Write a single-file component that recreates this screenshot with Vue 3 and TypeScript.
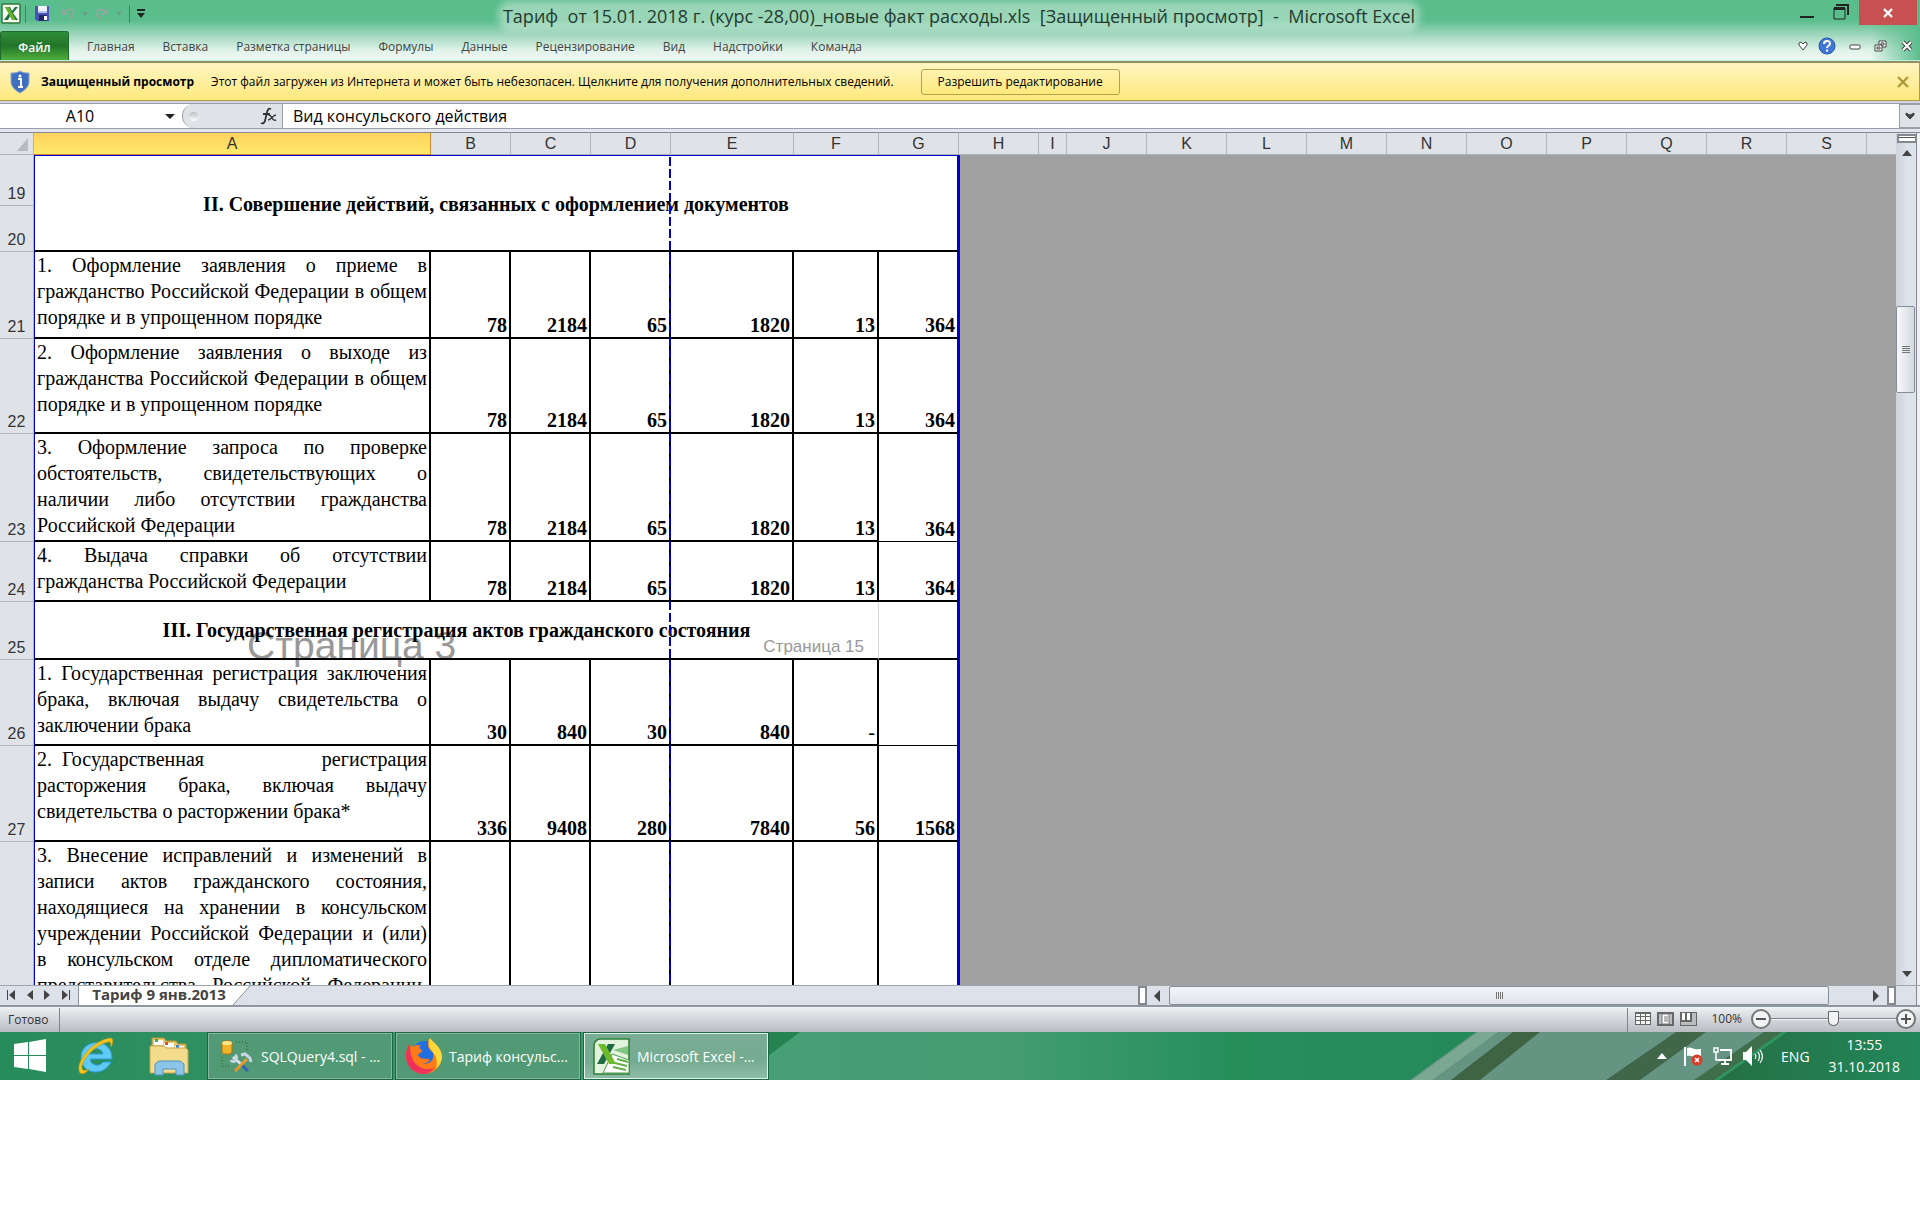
<script setup lang="ts">
import { ref } from 'vue'

interface Column {
  name: string
  width: number
}

interface TariffRow {
  num: number
  height: number
  text: string
  values: string[]
  thinLast?: boolean
  open?: boolean
}

const title = 'Тариф  от 15.01. 2018 г. (курс -28,00)_новые факт расходы.xls  [Защищенный просмотр]  -  Microsoft Excel'

const tabs: string[] = [
  'Главная', 'Вставка', 'Разметка страницы', 'Формулы', 'Данные',
  'Рецензирование', 'Вид', 'Надстройки', 'Команда',
]

const columns: Column[] = [
  { name: 'A', width: 397 }, { name: 'B', width: 80 }, { name: 'C', width: 80 },
  { name: 'D', width: 80 }, { name: 'E', width: 123 }, { name: 'F', width: 85 },
  { name: 'G', width: 80 }, { name: 'H', width: 80 }, { name: 'I', width: 28 },
  ...['J', 'K', 'L', 'M', 'N', 'O', 'P', 'Q', 'R', 'S'].map((name) => ({ name, width: 80 })),
]

const documentRows: TariffRow[] = [
  { num: 21, height: 87, text: '1. Оформление заявления о приеме в гражданство Российской Федерации в общем порядке и в упрощенном порядке', values: ['78', '2184', '65', '1820', '13', '364'] },
  { num: 22, height: 95, text: '2. Оформление заявления о выходе из гражданства Российской Федерации в общем порядке и в упрощенном порядке', values: ['78', '2184', '65', '1820', '13', '364'] },
  { num: 23, height: 108, text: '3. Оформление запроса по проверке обстоятельств, свидетельствующих о наличии либо отсутствии гражданства Российской Федерации', values: ['78', '2184', '65', '1820', '13', '364'], thinLast: true },
  { num: 24, height: 60, text: '4. Выдача справки об отсутствии гражданства Российской Федерации', values: ['78', '2184', '65', '1820', '13', '364'] },
]

const civilRows: TariffRow[] = [
  { num: 26, height: 86, text: '1. Государственная регистрация заключения брака, включая выдачу свидетельства о заключении брака', values: ['30', '840', '30', '840', '-', ''], thinLast: true },
  { num: 27, height: 96, text: '2.\u2002Государственная регистрация расторжения брака, включая выдачу свидетельства о расторжении брака*', values: ['336', '9408', '280', '7840', '56', '1568'] },
  { num: 28, height: 143, text: '3. Внесение исправлений и изменений в записи актов гражданского состояния, находящиеся на хранении в консульском учреждении Российской Федерации и (или) в\u00a0консульском отделе дипломатического представительства Российской Федерации,', values: ['', '', '', '', '', ''], open: true },
]

const cellName = ref('A10')
const formula = ref('Вид консульского действия')
const zoom = ref(50)
</script>

<template>
  <div class="screen">
    <header class="top">
      <div class="titlebar">
        <div class="quick">
          <svg class="app-icon" width="20" height="21" viewBox="0 0 20 21">
            <rect x="1" y="1" width="18" height="19" rx="1" fill="#f4faf2" stroke="#2c7a3a" stroke-width="1.5" />
            <path d="M4 4h5l2 4 3-4h3l-5 6 5 7h-5l-3-4-2 4H3l5-7z" fill="#1d6e45" />
            <path d="M4 4h4l7 13h-4z" fill="#67b22c" />
          </svg>
          <i class="bar"></i>
          <button class="save" type="button" aria-label="Сохранить">
            <svg width="15" height="15" viewBox="0 0 15 15">
              <path d="M0 0h14v15H2l-2-2z" fill="#4a51b8" />
              <path d="M3 0h9v7H3z" fill="#eef2fc" />
              <path d="M3 5h9v2H3z" fill="#b5c4e8" />
              <path d="M4 9h8v6H4z" fill="#23285e" />
              <path d="M9 10h3v4H9z" fill="#fff" />
            </svg>
          </button>
          <button type="button" aria-label="Отменить">
            <svg width="14" height="14" viewBox="0 0 14 14">
              <path d="M2 2v5h5M3 6c3-5 9-4 9 0 0 3-2 5-4 6" fill="none" stroke="#8fa99d" stroke-width="2" />
            </svg>
          </button>
          <i class="tri dim"></i>
          <button type="button" aria-label="Вернуть">
            <svg width="14" height="14" viewBox="0 0 14 14">
              <path d="M12 2v5H7M11 6C8 1 2 2 2 6c0 3 2 5 4 6" fill="none" stroke="#8fa99d" stroke-width="2" />
            </svg>
          </button>
          <i class="tri dim"></i>
          <i class="bar"></i>
          <span class="more"><i></i><i class="tri"></i></span>
        </div>
        <h1 class="title"><span>{{ title }}</span></h1>
        <div class="window-buttons">
          <button class="win" type="button" aria-label="Свернуть">
            <svg width="16" height="20" viewBox="0 0 16 20"><path d="M1 16h14v2H1z" fill="#222" /></svg>
          </button>
          <button class="win" type="button" aria-label="Развернуть">
            <svg width="16" height="20" viewBox="0 0 16 20">
              <path d="M3 5h12v10" fill="none" stroke="#222" stroke-width="2" />
              <path d="M1 8h11v11H1z" fill="none" stroke="#222" />
              <path d="M1 7h11v3H1z" fill="#222" />
            </svg>
          </button>
          <button class="close" type="button" aria-label="Закрыть">
            <svg width="12" height="10" viewBox="0 0 12 10"><path d="M2 1l8 8M10 1l-8 8" stroke="#fff" stroke-width="2.4" /></svg>
          </button>
        </div>
      </div>
      <nav class="ribbon">
        <button class="file" type="button">Файл</button>
        <button v-for="tab in tabs" :key="tab" class="tab" type="button">{{ tab }}</button>
        <div class="ribbon-right">
          <svg class="collapse" width="10" height="10" viewBox="0 0 10 10"><path d="M1 2l2-1 2 2 2-2 2 1v2L5 9 1 4z" fill="#fff" stroke="#444" /></svg>
          <svg width="18" height="18" viewBox="0 0 18 18">
            <circle cx="9" cy="9" r="8" fill="#4078d4" stroke="#2a55a8" />
            <path d="M6 7c0-4 6-4 6-.5C12 9 9 8.5 9 11M9 12.500v2" fill="none" stroke="#fff" stroke-width="2" />
          </svg>
          <svg width="12" height="14" viewBox="0 0 12 14"><rect x="1" y="6" width="10" height="4" rx="1" fill="#fff" stroke="#444" /></svg>
          <svg width="14" height="14" viewBox="0 0 14 14">
            <path d="M5 2h7v6H5z" fill="#fff" stroke="#444" /><path d="M7 4h3v2H7z" fill="#fff" stroke="#444" />
            <path d="M1 6h7v6H1z" fill="#fff" stroke="#444" /><path d="M3 8h3v2H3z" fill="#fff" stroke="#444" />
          </svg>
          <svg width="12" height="12" viewBox="0 0 12 12">
            <path d="M2 2l8 8M10 2l-8 8" stroke="#444" stroke-width="4" /><path d="M2 2l8 8M10 2l-8 8" stroke="#fff" stroke-width="2" />
          </svg>
        </div>
      </nav>
    </header>

    <section class="protected">
      <svg width="20" height="24" viewBox="0 0 20 24">
        <path d="M10 1c3 2 6 2 9 2v8c0 6-4 9-9 12-5-3-9-6-9-12V3c3 0 6 0 9-2z" fill="#3f6fc0" stroke="#8aa6cf" />
        <path d="M8 9h3v8M8 17h5" stroke="#fff" stroke-width="2" fill="none" /><circle cx="10" cy="6" r="1.500" fill="#fff" />
      </svg>
      <strong>Защищенный просмотр</strong>
      <span class="notice">Этот файл загружен из Интернета и может быть небезопасен. Щелкните для получения дополнительных сведений.</span>
      <button class="enable" type="button">Разрешить редактирование</button>
      <button class="dismiss" type="button" aria-label="Закрыть сообщение">
        <svg width="12" height="12" viewBox="0 0 12 12"><path d="M1 1l10 10M11 1L1 11" stroke="#b09a3c" stroke-width="2.400" /></svg>
      </button>
    </section>

    <section class="formula-bar">
      <input v-model="cellName" class="name-box" aria-label="Поле имени" />
      <i class="tri name-arrow"></i>
      <div class="fx-area">
        <i class="knob"></i>
        <svg width="18" height="20" viewBox="0 0 18 20">
          <path d="M11 3c-2-1-3 0-4 3L5 15c-1 2-2 3-4 2M3 8h7" fill="none" stroke="#333" stroke-width="1.800" />
          <path d="M8 9c2-1 3 1 4 3s2 3 4 2M16 9c-3 0-5 5-8 5" fill="none" stroke="#333" stroke-width="1.500" />
        </svg>
      </div>
      <input v-model="formula" class="formula" aria-label="Строка формул" />
      <button class="expand" type="button" aria-label="Развернуть строку формул">
        <svg width="10" height="8" viewBox="0 0 10 8"><path d="M1 1l4 2 4-2v2L5 7 1 3z" fill="#444" stroke="#444" /></svg>
      </button>
    </section>

    <main class="workspace">
      <div class="sheet">
        <table class="grid">
          <colgroup>
            <col class="numbers" />
            <col v-for="c in columns" :key="c.name" :style="{ width: c.width + 'px' }" />
            <col />
          </colgroup>
          <thead>
            <tr>
              <th class="corner"><svg width="11" height="13" viewBox="0 0 11 13"><path d="M11 0v13H0z" fill="#b7babf" /></svg></th>
              <th v-for="c in columns" :key="c.name" scope="col" :class="{ selected: c.name === 'A' }">{{ c.name }}</th>
              <th class="rest"></th>
            </tr>
          </thead>
          <tbody>
            <tr class="row-19">
              <th scope="row">19</th>
              <td class="section first" colspan="7" rowspan="2">II. Совершение действий, связанных с оформлением документов</td>
              <td class="outside" colspan="13" rowspan="2"></td>
            </tr>
            <tr class="row-20">
              <th scope="row">20</th>
            </tr>
            <tr v-for="row in documentRows" :key="row.num" :style="{ height: row.height + 'px' }">
              <th scope="row">{{ row.num }}</th>
              <td class="action">{{ row.text }}</td>
              <td v-for="(v, i) in row.values" :key="i" class="num" :class="{ thin: row.thinLast && i === 5 }">{{ v }}</td>
              <td class="outside" colspan="13"></td>
            </tr>
            <tr class="row-25">
              <th scope="row">25</th>
              <td class="section narrow" colspan="6">
                <span class="page-mark large">Страница 3</span>
                <span class="page-mark small">Страница 15</span>
                III. Государственная регистрация актов гражданского состояния
              </td>
              <td class="num"></td>
              <td class="outside" colspan="13"></td>
            </tr>
            <tr v-for="row in civilRows" :key="row.num" :style="{ height: row.height + 'px' }" :class="{ open: row.open }">
              <th scope="row">{{ row.open ? '' : row.num }}</th>
              <td class="action"><div>{{ row.text }}</div></td>
              <td v-for="(v, i) in row.values" :key="i" class="num" :class="{ thin: row.thinLast && i === 5, dash: v === '-' }">{{ v }}</td>
              <td class="outside" colspan="13"></td>
            </tr>
          </tbody>
        </table>
        <i class="page-break"></i>
      </div>
      <div class="vscroll">
        <i class="split"></i>
        <svg width="12" height="8" viewBox="0 0 12 8"><path d="M6 1l5 6H1z" fill="#444" /></svg>
        <div class="vtrack"><div class="vthumb"><i></i><i></i><i></i><i></i></div></div>
        <svg width="12" height="8" viewBox="0 0 12 8"><path d="M6 7L1 1h10z" fill="#444" /></svg>
      </div>
    </main>

    <section class="tab-strip">
      <div class="sheet-nav">
        <svg width="8" height="10" viewBox="0 0 8 10"><path d="M0 0h1v10H0zM8 0v10L2 5z" fill="#444" /></svg>
        <svg width="6" height="10" viewBox="0 0 6 10"><path d="M6 0v10L0 5z" fill="#444" /></svg>
        <svg width="6" height="10" viewBox="0 0 6 10"><path d="M0 0v10l6-5z" fill="#444" /></svg>
        <svg width="8" height="10" viewBox="0 0 8 10"><path d="M7 0h1v10H7zM0 0v10l6-5z" fill="#444" /></svg>
      </div>
      <button class="sheet-tab" type="button">Тариф 9 янв.2013</button>
      <svg width="20" height="19" viewBox="0 0 20 19"><path d="M0 0h19L2 19H0z" fill="#fff" /><path d="M19 0L2 19" stroke="#8b929c" fill="none" /></svg>
      <div class="hscroll">
        <i class="hsplit"></i>
        <svg class="left" width="6" height="12" viewBox="0 0 6 12"><path d="M6 0v12L0 6z" fill="#444" /></svg>
        <div class="hthumb"><i></i><i></i><i></i><i></i></div>
        <svg class="right" width="6" height="12" viewBox="0 0 6 12"><path d="M0 0v12l6-6z" fill="#444" /></svg>
        <i class="hsplit"></i>
      </div>
      <i class="grip-corner"></i>
    </section>

    <footer class="status">
      <span class="ready">Готово</span>
      <div class="view">
        <svg width="16" height="13" viewBox="0 0 16 13"><path d="M0 0h16v13H0z" fill="#666" /><path d="M1 2h4v2H1zM6 2h4v2H6zM11 2h4v2h-4zM1 5h4v3H1zM6 5h4v3H6zM11 5h4v3h-4zM1 9h4v3H1zM6 9h4v3H6zM11 9h4v3h-4z" fill="#f4f4f4" /></svg>
        <svg width="17" height="14" viewBox="0 0 17 14"><path d="M1 1h15v12H1z" fill="#b9bcc0" stroke="#666" stroke-width="2" /><path d="M5 2h7v10H5z" fill="#fff" stroke="#777" /><path d="M7 5h4M7 7h4M7 9h4" stroke="#777" /></svg>
        <svg width="17" height="14" viewBox="0 0 17 14"><path d="M0 0h17v14H0z" fill="#666" /><path d="M2 1h3v7H2zM7 1h3v7H7z" fill="#fff" /><path d="M12 1h4v12H1v-3h11z" fill="#b9bcc0" /></svg>
        <span class="percent">100%</span>
        <button class="round" type="button" aria-label="Уменьшить"><svg width="10" height="10" viewBox="0 0 10 10"><path d="M0 4h10v2H0z" fill="#555" /></svg></button>
        <input v-model="zoom" class="zoom" type="range" min="0" max="100" aria-label="Масштаб" />
        <button class="round" type="button" aria-label="Увеличить"><svg width="10" height="10" viewBox="0 0 10 10"><path d="M0 4h10v2H0zM4 0h2v10H4z" fill="#555" /></svg></button>
      </div>
    </footer>

    <div class="taskbar">
      <svg class="wall" viewBox="0 0 1920 48" preserveAspectRatio="none">
        <defs>
          <linearGradient id="felt" x1="0" x2="1">
            <stop offset="0" stop-color="#268b5b" /><stop offset=".4" stop-color="#47a075" />
            <stop offset=".52" stop-color="#459d72" /><stop offset=".64" stop-color="#258f5c" /><stop offset=".76" stop-color="#258a5a" />
          </linearGradient>
          <linearGradient id="edge" x1="0" x2="1"><stop offset="0" stop-color="#256f45" /><stop offset="1" stop-color="#22885a" /></linearGradient>
        </defs>
        <path d="M0 0h1920v48H0z" fill="url(#felt)" />
        <path d="M740 0h60l-32 24h-28z" fill="#248350" />
        <path d="M1476 0h320l-66 48h-320z" fill="#659483" />
        <path d="M1478 0h20l-66 48h-20z" fill="#7aa893" />
        <path d="M1513 0h27l-60 48h-29z" fill="#3e6444" />
        <path d="M1676 0h30l-66 48h-34z" fill="#41674a" />
        <path d="M1764 0h22l-68 48h-24z" fill="#3f6e4b" />
        <path d="M1786 0h134v48h-202z" fill="url(#edge)" />
        <path d="M1782 0h5l-68 48h-5z" fill="#2f9560" />
      </svg>
      <button class="launch" type="button" aria-label="Пуск">
        <svg width="32" height="34" viewBox="0 0 32 34"><path d="M0 5l14-2v13H0zM15 3l17-3v16H15zM0 17h14v13L0 28zM15 17h17v16l-17-3z" fill="#fff" /></svg>
      </button>
      <button class="launch ie" type="button" aria-label="Internet Explorer">
        <svg width="38" height="40" viewBox="0 0 38 40">
          <path d="M36 23H14c1 7 10 8 13 3h8C28 41 5 39 5 21 5 3 36 0 36 23zM14 18h13c-1-7-12-7-13 0z" fill="#5fcbf4" stroke="#2d9fdc" />
          <path d="M4 37C-2 27 16 5 34 2c4 0 3 6 1 9 0-3 0-6-3-5C18 9 5 25 6 32c0 3 4 3 7 1-3 4-6 6-9 4z" fill="#f2c41d" stroke="#c8960c" stroke-width=".6" />
        </svg>
      </button>
      <button class="launch" type="button" aria-label="Проводник">
        <svg width="42" height="40" viewBox="0 0 42 40">
          <path d="M4 2h12l2 3h10l2 3h8v28H4z" fill="#e6c66a" stroke="#b9923b" />
          <path d="M6 4h9v5H6zM16 7h10v5H16zM27 10h9v4h-9z" fill="#fff" />
          <path d="M7 3h3v3H7z" fill="#3fae4a" /><path d="M17 6h3v3h-3z" fill="#e04b3a" /><path d="M28 9h3v3h-3z" fill="#3a86d8" />
          <path d="M2 10h14l3 2h19l2 2v23H2z" fill="#f3dc8c" stroke="#c7a24c" />
          <path d="M7 39V28l4-3h21l4 3v11h-8v-6H15v6z" fill="#8cc5e8" stroke="#4f93c4" />
        </svg>
      </button>
      <div class="tasks">
        <button class="task" type="button">
          <svg width="36" height="36" viewBox="0 0 36 36">
            <path d="M4 5c0-3 10-3 10 0v9c0 3-10 3-10 0z" fill="#f0b429" stroke="#a87412" /><ellipse cx="9" cy="5" rx="5" ry="2" fill="#ffe58a" />
            <path d="M18 4h11v9M4 19v9h9" fill="none" stroke="#2c5a16" stroke-dasharray="1 2" />
            <path d="M16 20l14 13" stroke="#3060b8" stroke-width="3" /><path d="M15 19l9 8" stroke="#dfe6ee" stroke-width="3" />
            <path d="M29 21L17 33" stroke="#e39a30" stroke-width="3" />
            <path d="M13 22c1 2 4 2 5 0s1-4-1-5" fill="none" stroke="#c9d4e2" stroke-width="3" />
            <path d="M23 17l4-1 5 4 1 4" fill="none" stroke="#c9d4e2" stroke-width="3" />
          </svg>
          <span>SQLQuery4.sql - ...</span>
        </button>
        <button class="task" type="button">
          <svg width="36" height="36" viewBox="0 0 36 36">
            <circle cx="19" cy="17" r="14" fill="#1f6fe0" />
            <path d="M24 0c2 4 11 8 12 18 0 10-8 18-18 18S0 28 0 18C0 12 2 8 4 5c0 3 1 4 2 4 3-2 6-2 9-2-2 1-2 4 1 5 1 2-3 3-4 5 3 6 10 2 12 5-3 4-8 4-10 3 9 3 15-3 13-10-2-3-6-5-5-9 0-2 0-4 2-6z" fill="#ff7a18" />
            <path d="M24 0c2 4 11 8 12 18 0 6-3 10-6 13 2-8 0-13-4-18-4-4-4-9-2-13z" fill="#ffd83a" />
            <path d="M0 18C0 12 2 8 4 5c0 8 0 20 12 25 5 2 9 1 12 0-3 4-7 6-10 6C8 36 0 28 0 18z" fill="#f0305a" />
          </svg>
          <span>Тариф консульс...</span>
        </button>
        <button class="task active" type="button">
          <svg width="37" height="37" viewBox="0 0 37 37">
            <path d="M7 1h29v35H1V7c0-3 3-6 6-6z" fill="#e3f2dc" stroke="#2f8139" stroke-width="1.600" />
            <path d="M20 12l15 5v-9z" fill="#80c883" /><path d="M19 16l17 6v13H10z" fill="#fff" stroke="#4a9c50" />
            <path d="M24 21l11 3M22 25l12 3M20 29l13 3" stroke="#5fb045" stroke-width="2" />
            <path d="M22 6h-7L4 26h7z" fill="#1d6b42" /><path d="M5 6h7l11 20h-7z" fill="#6dbb2d" />
          </svg>
          <span>Microsoft Excel -...</span>
        </button>
      </div>
      <div class="tray">
        <svg width="10" height="6" viewBox="0 0 10 6"><path d="M5 0l5 6H0z" fill="#fff" /></svg>
        <svg width="20" height="20" viewBox="0 0 20 20"><path d="M2 1v19" stroke="#fff" stroke-width="2" /><path d="M4 2c4-2 5 2 14 1v8c-8 1-9-2-14-1z" fill="#fff" /><circle cx="14" cy="14" r="5.500" fill="#dc3a28" /><path d="M12 12l4 4M16 12l-4 4" stroke="#fff" stroke-width="1.600" /></svg>
        <svg width="20" height="20" viewBox="0 0 20 20"><path d="M7 4h11v10H5M12 14v4M8 18h8" fill="none" stroke="#fff" stroke-width="1.800" /><path d="M1 2h4v4H1zM3 6v8h3" fill="none" stroke="#fff" stroke-width="1.500" /></svg>
        <svg width="20" height="20" viewBox="0 0 20 20"><path d="M0 6h3l6-6v20l-6-6H0z" fill="#fff" /><path d="M12 8c1 1 1 3 0 5M15 6c2 3 2 6 0 9M17 4c3 4 3 9 0 13" fill="none" stroke="#fff" stroke-width="1.200" /></svg>
        <span class="lang">ENG</span>
        <div class="clock"><span>13:55</span><span>31.10.2018</span></div>
      </div>
    </div>
  </div>
</template>

<style>
body {
  background: #fff;
}
</style>

<style scoped>
.screen {
  font-family: "Open Sans", "Noto Sans", sans-serif;
  font-size: 12px;
  color: #000;
  overflow: hidden;
}
.screen *,
.screen *::before {
  box-sizing: border-box;
}
button {
  margin: 0;
  padding: 0;
  border: 0;
  background: none;
  font: inherit;
  color: inherit;
  white-space: nowrap;
}
input {
  margin: 0;
  padding: 0;
  border: 0;
  outline: 0;
  background: none;
  font: inherit;
  color: inherit;
}
svg {
  display: block;
  flex: none;
}

/* title and ribbon */
.top {
  background:
    linear-gradient(to left, #5abd8c 0, rgba(90, 189, 140, 0) 50px),
    linear-gradient(#5abd8c 0, #5abd8c 20px, #9bd5b9 34px, #dff2e9 50px, #f0f9f4 60px);
  border-bottom: 1px solid #b5f2ea;
}
.titlebar {
  display: flex;
  align-items: flex-start;
  height: 31px;
}
.quick,
.window-buttons {
  flex: 1 1 0;
  display: flex;
}
.quick {
  align-items: center;
  height: 27px;
  padding-left: 1px;
  gap: 7px;
}
.bar {
  width: 1px;
  height: 18px;
  background: #4b7d67;
}
.app-icon {
  margin-right: -3px;
}
.save {
  margin: 0 4px 0 2px;
}
.tri {
  border: 4px solid transparent;
  border-top: 5px solid #222;
  border-bottom: 0;
}
.tri.dim {
  border-width: 4px 3px 0;
  border-top-color: #6f9c88;
}
.more {
  display: flex;
  flex-direction: column;
  align-items: center;
  gap: 2px;
}
.more i:first-child {
  width: 8px;
  height: 2px;
  background: #222;
}
.title {
  margin: 0;
  padding-top: 6px;
  font-size: 18px;
  font-weight: 400;
  color: #263a30;
  white-space: pre;
}
.title span {
  display: block;
  height: 20px;
  line-height: 20px;
  border-radius: 8px;
  background: rgba(255, 255, 255, 0.38);
  box-shadow: 0 0 7px 5px rgba(255, 255, 255, 0.38);
}
.window-buttons {
  justify-content: flex-end;
  padding-right: 3px;
}
.win {
  width: 34px;
  height: 20px;
}
.close {
  width: 58px;
  height: 25px;
  margin-left: -8px;
  background: #c75050;
}
.close svg {
  margin: 0 auto;
}
.ribbon {
  display: flex;
  height: 29px;
  line-height: 31px;
  color: #444;
}
.file {
  width: 69px;
  margin-right: 4px;
  border: 1px solid #1d6b2c;
  border-bottom: 0;
  border-radius: 3px 3px 0 0;
  background: linear-gradient(#2f8c38, #237528 50%, #4fae3c);
  color: #fff;
  font-weight: 600;
}
.tab {
  padding: 0 14px;
}
.ribbon-right {
  margin-left: auto;
  padding-right: 7px;
  display: flex;
  align-items: center;
  gap: 13px;
}
.collapse {
  margin-right: -3px;
}

/* protected view */
.protected {
  display: flex;
  align-items: center;
  height: 40px;
  padding: 0 10px;
  border: 1px solid #a99d4a;
  border-left: 0;
  border-top: 2px solid #948f5c;
  background: linear-gradient(#fff5c2, #fee97c);
}
.protected strong {
  margin: 0 17px 0 11px;
}
.enable {
  width: 199px;
  height: 26px;
  margin-left: 27px;
  border: 1px solid #b3a24c;
  border-radius: 3px;
  background: linear-gradient(#fff3b0, #fee97c);
}
.dismiss {
  margin-left: auto;
}

/* formula bar */
.formula-bar {
  display: flex;
  align-items: center;
  height: 31px;
  border-top: 2px solid #d0d4dc;
  border-bottom: 3px solid #e3e6f0;
  background: #fff;
  box-shadow: inset 0 1px #9a9ea6, inset 0 -1px #9a9ea6;
  font-size: 16px;
}
.name-box {
  width: 160px;
  height: 22px;
  text-align: center;
}
.name-arrow {
  margin: 0 7px 0 5px;
  border-width: 5px;
  border-bottom-width: 0;
}
.fx-area {
  width: 101px;
  height: 24px;
  padding: 0 4px 0 6px;
  display: flex;
  align-items: center;
  justify-content: space-between;
  border: solid #9a9ea6;
  border-width: 0 1px;
  border-radius: 12px 0 0 12px;
  background: #dfe3e8;
}
.knob {
  width: 9px;
  height: 9px;
  border-radius: 50%;
  background: linear-gradient(#b9bdc2, #fff);
}
.formula {
  flex: 1;
  height: 22px;
  padding-left: 10px;
}
.expand {
  width: 21px;
  height: 24px;
  border: 1px solid #9a9ea6;
  border-right: 0;
  background: #dfe3e8;
}
.expand svg {
  margin: 0 auto;
}

/* worksheet */
.workspace {
  display: flex;
}
.sheet {
  position: relative;
  flex: 1;
  min-width: 0;
  overflow: hidden;
  isolation: isolate;
  background: #fff;
}
.grid {
  width: 100%;
  table-layout: fixed;
  border-collapse: separate;
  border-spacing: 0;
}
.numbers {
  width: 34px;
}
.row-19 {
  height: 51px;
}
.row-20 {
  height: 46px;
}
.row-25 {
  height: 58px;
}
.grid th {
  padding: 0;
  font: 16px/18px "Liberation Sans", Arial, sans-serif;
  color: #333;
  background: #dfe3e8;
  border: solid #b0b5bb;
  border-width: 0 1px 1px 0;
}
.grid thead th {
  height: 23px;
  padding-top: 1px;
  border-top: 1px solid #85898f;
  line-height: 20px;
}
.grid thead th.rest {
  border-right: 0;
}
.grid thead th.selected {
  background: linear-gradient(#ffd25c, #ffe96b);
  border-right-color: #c78b30;
  border-bottom-color: #c78b30;
}
.corner svg {
  margin-left: 17px;
}
.grid tbody th {
  padding-bottom: 2px;
  vertical-align: bottom;
}
.grid td {
  padding: 0 2px;
  font: 20px/26px "Liberation Serif", "Times New Roman", serif;
  border: solid #000;
  border-width: 0 2px 2px 0;
}
.grid td.action {
  vertical-align: top;
  text-align: justify;
  border-left: 1px solid #0000cc;
}
.grid td.num {
  vertical-align: bottom;
  text-align: right;
  font-weight: 700;
  line-height: 24px;
}
.grid td.num.dash {
  font-weight: 400;
}
.grid td.num:nth-last-child(2),
.grid td.first {
  border-right-color: #0000cc;
}
.grid td.thin {
  border-bottom-width: 1px;
}
.grid td.section {
  position: relative;
  text-align: center;
  vertical-align: middle;
  font-weight: 700;
  border-left: 1px solid #0000cc;
}
.grid td.first {
  padding-top: 1px;
  border-top: 1px solid #0000cc;
}
.grid td.narrow {
  border-right: 1px solid #d8d8d8;
}
.grid td.outside {
  padding: 0;
  border: 0;
  border-left: 1px solid #0000cc;
  background: #a0a0a0;
}
.open td,
.open th {
  border-bottom: 0 !important;
}
.open .action div {
  height: 143px;
  overflow: hidden;
  text-align-last: justify;
}
.page-mark {
  position: absolute;
  z-index: -1;
  font-family: "Liberation Sans", Arial, sans-serif;
  font-weight: 400;
  color: #989898;
  white-space: nowrap;
}
.page-mark.large {
  left: 212px;
  bottom: -11px;
  font-size: 39px;
  line-height: 46px;
}
.page-mark.small {
  right: 14px;
  bottom: 0;
  font-size: 17px;
  line-height: 22px;
}
.page-break {
  position: absolute;
  left: 669px;
  top: 25px;
  bottom: 0;
  width: 2px;
  background: repeating-linear-gradient(#0000cc 0 9px, transparent 9px 12px);
}
.vscroll {
  width: 24px;
  display: flex;
  flex-direction: column;
  align-items: center;
  padding: 1px 3px 7px 0;
  border-top: 1px solid #85898f;
  background: linear-gradient(to right, #cfd4dc 0, #dde3eb 12px, #dde3eb 20px, #85898f 20px, #85898f 21px, #eef0f5 21px);
}
.split {
  width: 20px;
  height: 9px;
  margin-bottom: 6px;
  border: 2px solid #85898f;
  background: linear-gradient(#fff 0 1px, #555 1px 2px, #fff 2px);
}
.vtrack {
  flex: 1;
  align-self: stretch;
  display: flex;
  flex-direction: column;
}
.vtrack::before {
  content: "";
  flex: 149;
}
.vtrack::after {
  content: "";
  flex: 575;
}
.vthumb {
  width: 19px;
  height: 87px;
  display: flex;
  flex-direction: column;
  align-items: center;
  justify-content: center;
  gap: 1px;
  border: 1px solid #858d98;
  border-radius: 2px;
  background: linear-gradient(to right, #f6f8fb, #d5dae0);
}
.vthumb i {
  width: 8px;
  height: 1px;
  background: #777;
}

/* sheet tabs */
.tab-strip {
  display: flex;
  height: 22px;
  border-top: 1px solid #a0a5ad;
  border-bottom: 2px solid #8f97a5;
  background: #dde1ea;
}
.sheet-nav {
  width: 79px;
  padding: 0 8px 2px 7px;
  display: flex;
  align-items: center;
  justify-content: space-between;
  border-right: 1px solid #8b929c;
}
.sheet-tab {
  width: 152px;
  padding: 0 0 2px 8px;
  background: #fff;
  color: #444;
  font-size: 15px;
  font-weight: 700;
  line-height: 17px;
  text-align: center;
}
.hscroll {
  display: flex;
  align-items: center;
  flex: 0 1 758px;
  margin-left: auto;
}
.hsplit {
  width: 9px;
  height: 19px;
  border: 2px solid #85898f;
  background: #fff;
}
.hscroll .left {
  margin: 0 9px 0 7px;
}
.hscroll .right {
  margin: 0 8px 0 44px;
}
.hthumb {
  flex: 1;
  height: 19px;
  display: flex;
  align-items: center;
  justify-content: center;
  gap: 1px;
  border: 1px solid #858d98;
  border-radius: 2px;
  background: linear-gradient(#f1f4f8, #dfe2e8);
}
.hthumb i {
  width: 1px;
  height: 7px;
  background: #777;
}
.grip-corner {
  width: 24px;
  background: linear-gradient(to right, #dde1ea 20px, #85898f 20px 21px, #eef0f5 21px);
}

/* status bar */
.status {
  display: flex;
  align-items: center;
  justify-content: space-between;
  height: 25px;
  background: linear-gradient(#f0f2f4 0, #dcdfe3 30%, #b9bdc2);
  color: #333;
}
.ready {
  width: 60px;
  padding-left: 8px;
  line-height: 24px;
  border-right: 1px solid #808387;
}
.view {
  display: flex;
  align-items: center;
  height: 24px;
  padding: 0 4px 2px 7px;
  gap: 6px;
  border-left: 1px solid #808387;
}
.percent {
  margin: 0 3px 0 8px;
}
.round {
  width: 20px;
  height: 20px;
  border: 2px solid #777;
  border-radius: 50%;
  background: #f2f3f5;
}
.round svg {
  margin: 0 auto;
}
.zoom {
  appearance: none;
  width: 125px;
  height: 16px;
  margin: 0 -6px;
  background: linear-gradient(transparent 7px, #7d838c 7px 8px, #f4f4f4 8px 9px, transparent 9px);
}
.zoom::-webkit-slider-thumb {
  appearance: none;
  width: 11px;
  height: 15px;
  border: 1px solid #666;
  border-radius: 1px 1px 6px 6px;
  background: #f2f3f5;
}

/* taskbar */
.taskbar {
  position: relative;
  display: flex;
  align-items: center;
  height: 48px;
  padding-left: 14px;
  color: #fff;
  font-size: 14px;
}
.wall {
  position: absolute;
  inset: 0;
  width: 100%;
  height: 100%;
}
.taskbar button,
.tray {
  position: relative;
}
.launch {
  margin-right: 30px;
}
.launch.ie {
  margin-right: 34px;
}
.tasks {
  display: flex;
  gap: 2px;
  margin-left: -13px;
}
.task {
  width: 186px;
  height: 48px;
  padding-left: 10px;
  display: flex;
  align-items: center;
  gap: 7px;
  border: 1px solid #1b6842;
  box-shadow: inset 0 0 0 1px #86b8a0;
  background: #529a76;
}
.task.active {
  padding-left: 9px;
  background: linear-gradient(#79ae94, #75ab90 60%, #8fbda6);
  box-shadow: inset 0 0 0 1px #e4f0ea;
}
.tray {
  display: flex;
  align-items: center;
  gap: 10px;
  margin-left: auto;
  padding-right: 20px;
}
.tray svg:first-child {
  margin-right: 6px;
}
.lang {
  margin: 0 9px 0 8px;
}
.clock {
  display: flex;
  flex-direction: column;
  align-items: center;
  line-height: 22px;
}
</style>
